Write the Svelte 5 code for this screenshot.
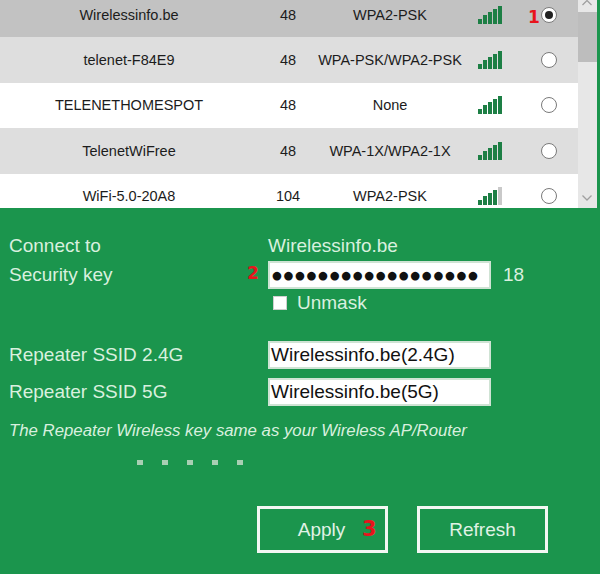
<script lang="ts">
  const networks = [
    { ssid: "Wirelessinfo.be", channel: 48, security: "WPA2-PSK", bars: 5, selected: true, shaded: false },
    { ssid: "telenet-F84E9", channel: 48, security: "WPA-PSK/WPA2-PSK", bars: 5, selected: false, shaded: true },
    { ssid: "TELENETHOMESPOT", channel: 48, security: "None", bars: 5, selected: false, shaded: false },
    { ssid: "TelenetWiFree", channel: 48, security: "WPA-1X/WPA2-1X", bars: 5, selected: false, shaded: true },
    { ssid: "WiFi-5.0-20A8", channel: 104, security: "WPA2-PSK", bars: 4, selected: false, shaded: false },
  ];
  const barHeights = [5, 9, 12, 15, 18];
</script>

<div class="page">
  <div class="list-area">
    <div class="list">
      {#each networks as net}
        <div class="row" class:selected={net.selected} class:shaded={net.shaded}>
          <div class="col-ssid">{net.ssid}</div>
          <div class="col-channel">{net.channel}</div>
          <div class="col-security">{net.security}</div>
          <div class="col-signal">
            {#each barHeights as h, b}
              <span class="bar" class:off={b >= net.bars} style="height: {h}px"></span>
            {/each}
          </div>
          <div class="col-radio">
            {#if net.selected}<span class="mark">1</span>{/if}
            <span class="radio"><span class:dot={net.selected}></span></span>
          </div>
        </div>
      {/each}
    </div>
    <div class="scrollbar">
      <svg class="arrow up" width="12" height="8" viewBox="0 0 12 8">
        <path d="M1.5 6 L6 1.5 L10.5 6" fill="none" stroke="#a0a0a0" stroke-width="1.3" />
      </svg>
      <div class="thumb"></div>
      <svg class="arrow down" width="12" height="8" viewBox="0 0 12 8">
        <path d="M1.5 1.5 L6 6 L10.5 1.5" fill="none" stroke="#a0a0a0" stroke-width="1.3" />
      </svg>
    </div>
  </div>

  <div class="form">
    <div class="field first">
      <div class="label">Connect to</div>
      <div class="value">Wirelessinfo.be</div>
    </div>
    <div class="field key">
      <div class="label">Security key</div>
      <div class="value">
        <span class="mark two">2</span>
        <div class="input dots">●●●●●●●●●●●●●●●●●●</div>
        <span class="count">18</span>
      </div>
    </div>
    <div class="unmask">
      <span class="check"></span>
      <span>Unmask</span>
    </div>

    <div class="field repeater">
      <div class="label">Repeater SSID 2.4G</div>
      <div class="value"><div class="input">Wirelessinfo.be(2.4G)</div></div>
    </div>
    <div class="field repeater second">
      <div class="label">Repeater SSID 5G</div>
      <div class="value"><div class="input">Wirelessinfo.be(5G)</div></div>
    </div>

    <p class="note">The Repeater Wireless key same as your Wireless AP/Router</p>

    <div class="progress">
      {#each [0, 1, 2, 3, 4] as n}
        <span data-n={n}></span>
      {/each}
    </div>

    <div class="actions">
      <button type="button" class="btn apply">Apply<span class="mark three">3</span></button>
      <button type="button" class="btn">Refresh</button>
    </div>
  </div>
</div>

<style>
  :global(body) {
    margin: 0;
    background: #1b954d;
  }

  .page {
    width: 600px;
    height: 574px;
    overflow: hidden;
    background: #1b954d;
    font-family: "Liberation Sans", Arial, sans-serif;
  }

  .list-area {
    display: flex;
    height: 208px;
    overflow: hidden;
    padding-right: 3px;
    box-sizing: border-box;
  }

  .list {
    width: 578px;
    flex: none;
    margin-top: -8px;
  }

  .row {
    display: flex;
    align-items: center;
    height: 45.4px;
    font-size: 14.5px;
    color: #1c1c1c;
    background: #fff;
  }

  .row.shaded {
    background: #dedede;
  }

  .row.selected {
    background: #c2c2c2;
  }

  .col-ssid {
    width: 258px;
    text-align: center;
  }

  .col-channel {
    width: 60px;
    text-align: center;
  }

  .col-security {
    width: 144px;
    text-align: center;
  }

  .col-signal {
    width: 24px;
    margin-left: 16px;
    display: flex;
    align-items: flex-end;
    gap: 1px;
    height: 18px;
  }

  .bar {
    width: 4px;
    background: #1d7f45;
  }

  .bar.off {
    background: #c9c9c9;
  }

  .col-radio {
    flex: 1;
    display: flex;
    align-items: center;
    padding-left: 39px;
    position: relative;
  }

  .radio {
    width: 14px;
    height: 14px;
    border: 1px solid #7a7a7a;
    border-radius: 50%;
    background: #fff;
    display: flex;
    align-items: center;
    justify-content: center;
  }

  .dot {
    width: 8px;
    height: 8px;
    border-radius: 50%;
    background: #222;
  }

  .mark {
    font-family: "DejaVu Sans", sans-serif;
    font-weight: 700;
    color: #e8141c;
    font-size: 17px;
    line-height: 1;
  }

  .col-radio .mark {
    position: absolute;
    left: 26px;
    top: 2px;
  }

  .scrollbar {
    flex: 1;
    background: #e7e7e7;
    position: relative;
  }

  .thumb {
    height: 50px;
    margin-top: 12px;
    background: #bdbdbd;
  }

  .arrow {
    position: absolute;
    left: 3px;
  }

  .arrow.up {
    top: -1px;
  }

  .arrow.down {
    bottom: 6px;
  }

  .form {
    padding: 23px 0 0 9px;
    color: #d9f0df;
    font-size: 19px;
  }

  .field {
    display: flex;
    align-items: center;
    height: 30px;
  }

  .label {
    width: 259px;
    flex: none;
  }

  .value {
    display: flex;
    align-items: center;
    position: relative;
  }

  .field.key {
    height: 28px;
  }

  .input {
    box-sizing: border-box;
    width: 223px;
    height: 28px;
    background: #fff;
    border: 2px solid #cfe3d4;
    color: #111;
    font-size: 19px;
    line-height: 24px;
    padding-left: 1px;
    white-space: nowrap;
    overflow: hidden;
  }

  .input.dots {
    font-family: "DejaVu Sans", sans-serif;
    font-size: 11.3px;
    letter-spacing: 1.67px;
    line-height: 25px;
    padding-left: 2px;
  }

  .count {
    margin-left: 12px;
  }

  .two {
    position: absolute;
    left: -21px;
    top: 4px;
  }

  .unmask {
    display: flex;
    align-items: center;
    gap: 10px;
    margin: 2px 0 0 264px;
    height: 24px;
  }

  .check {
    width: 14px;
    height: 14px;
    background: #fff;
    border: 1px solid #cfcfcf;
    box-sizing: border-box;
  }

  .field.repeater {
    margin-top: 26px;
    height: 28px;
  }

  .field.repeater.second {
    margin-top: 9px;
  }

  .note {
    margin: 15px 0 0;
    font-size: 16.8px;
    font-style: italic;
    line-height: 20px;
  }

  .progress {
    display: flex;
    gap: 19px;
    margin: 19px 0 0 128px;
  }

  .progress span {
    width: 6px;
    height: 5px;
    background: #a9cfb3;
  }

  .actions {
    display: flex;
    gap: 29px;
    margin: 41px 0 0 248px;
  }

  .btn {
    position: relative;
    box-sizing: border-box;
    width: 131px;
    height: 47px;
    background: transparent;
    border: 3px solid #f2f7f3;
    color: #e0f2e5;
    font-family: inherit;
    font-size: 19px;
    padding: 0;
  }

  .apply {
    padding-right: 2px;
  }

  .three {
    position: absolute;
    left: 102px;
    top: 10px;
    font-size: 21px;
  }
</style>
